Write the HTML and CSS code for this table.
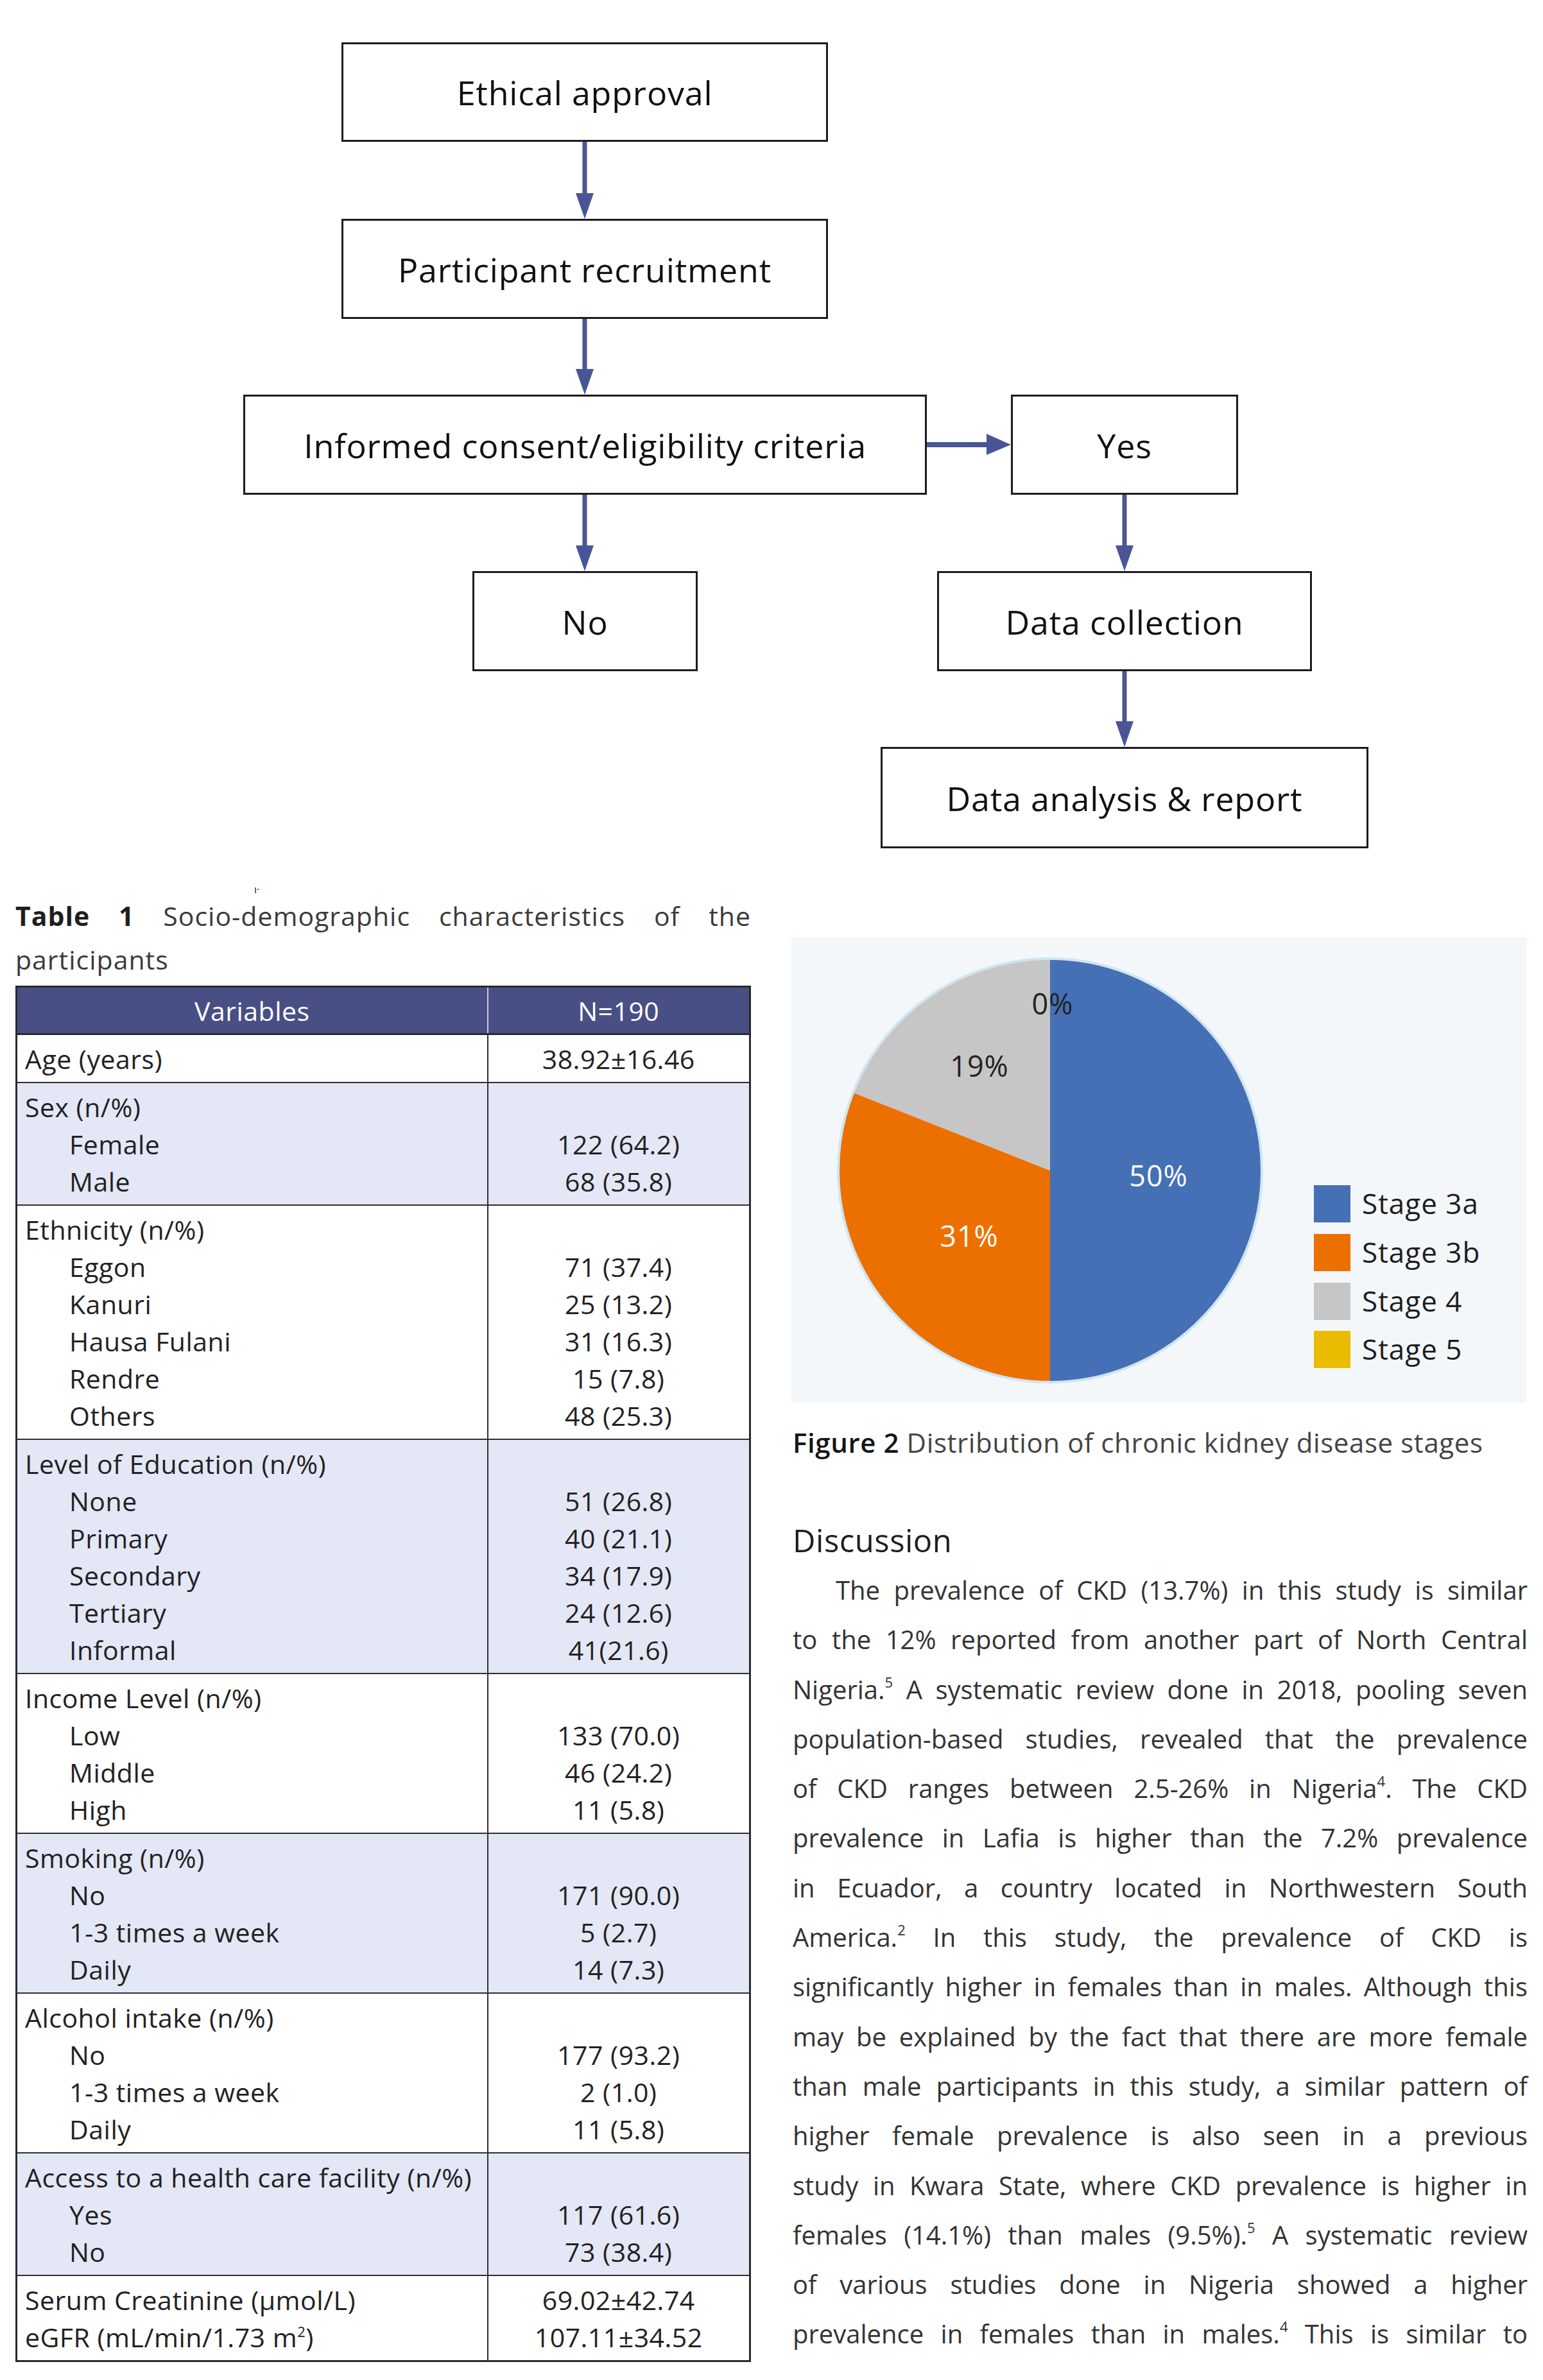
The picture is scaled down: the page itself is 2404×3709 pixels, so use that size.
FILE: index.html
```html
<!DOCTYPE html>
<html lang="en">
<head>
<meta charset="utf-8">
<title>CKD study</title>
<link rel="stylesheet" href="styles.css">
</head>
<body>
<div class="flow">
  <svg class="flow-arrows" width="2404" height="1380" viewBox="0 0 2404 1380">
    <g fill="#4a5597" stroke="none">
      <rect x="907.5" y="220" width="7" height="84"/>
      <polygon points="897,301 925,301 911,341"/>
      <rect x="907.5" y="497" width="7" height="81"/>
      <polygon points="897,575 925,575 911,615"/>
      <rect x="907.5" y="771" width="7" height="82"/>
      <polygon points="897,850 925,850 911,890"/>
      <rect x="1748.5" y="771" width="7" height="82"/>
      <polygon points="1738,850 1766,850 1752,890"/>
      <rect x="1748.5" y="1046" width="7" height="81"/>
      <polygon points="1738,1124 1766,1124 1752,1164"/>
      <rect x="1443" y="689" width="98" height="8"/>
      <polygon points="1537,676 1537,709 1575,693"/>
    </g>
  </svg>
  <div class="node n-ethic">Ethical approval</div>
  <div class="node n-recruit">Participant recruitment</div>
  <div class="node n-consent">Informed consent/eligibility criteria</div>
  <div class="node n-yes">Yes</div>
  <div class="node n-no">No</div>
  <div class="node n-collect">Data collection</div>
  <div class="node n-analysis">Data analysis &amp; report</div>
</div>

<div class="cols">
  <section class="left">
    <div class="stray">ı·</div>
    <div class="tcap">
      <span class="jline"><b>Table 1</b> Socio-demographic characteristics of the</span>
      <span class="lline">participants</span>
    </div>
    <table class="t1">
      <colgroup><col class="c1"><col class="c2"></colgroup>
      <thead>
        <tr><th>Variables</th><th>N=190</th></tr>
      </thead>
      <tbody>
        <tr class="w">
          <td><div>Age (years)</div></td>
          <td><div>38.92±16.46</div></td>
        </tr>
        <tr class="b">
          <td><div>Sex (n/%)</div><div class="sub">Female</div><div class="sub">Male</div></td>
          <td><div>&nbsp;</div><div>122 (64.2)</div><div>68 (35.8)</div></td>
        </tr>
        <tr class="w">
          <td><div>Ethnicity (n/%)</div><div class="sub">Eggon</div><div class="sub">Kanuri</div><div class="sub">Hausa Fulani</div><div class="sub">Rendre</div><div class="sub">Others</div></td>
          <td><div>&nbsp;</div><div>71 (37.4)</div><div>25 (13.2)</div><div>31 (16.3)</div><div>15 (7.8)</div><div>48 (25.3)</div></td>
        </tr>
        <tr class="b">
          <td><div>Level of Education (n/%)</div><div class="sub">None</div><div class="sub">Primary</div><div class="sub">Secondary</div><div class="sub">Tertiary</div><div class="sub">Informal</div></td>
          <td><div>&nbsp;</div><div>51 (26.8)</div><div>40 (21.1)</div><div>34 (17.9)</div><div>24 (12.6)</div><div>41(21.6)</div></td>
        </tr>
        <tr class="w">
          <td><div>Income Level (n/%)</div><div class="sub">Low</div><div class="sub">Middle</div><div class="sub">High</div></td>
          <td><div>&nbsp;</div><div>133 (70.0)</div><div>46 (24.2)</div><div>11 (5.8)</div></td>
        </tr>
        <tr class="b">
          <td><div>Smoking (n/%)</div><div class="sub">No</div><div class="sub">1-3 times a week</div><div class="sub">Daily</div></td>
          <td><div>&nbsp;</div><div>171 (90.0)</div><div>5 (2.7)</div><div>14 (7.3)</div></td>
        </tr>
        <tr class="w">
          <td><div>Alcohol intake (n/%)</div><div class="sub">No</div><div class="sub">1-3 times a week</div><div class="sub">Daily</div></td>
          <td><div>&nbsp;</div><div>177 (93.2)</div><div>2 (1.0)</div><div>11 (5.8)</div></td>
        </tr>
        <tr class="b">
          <td><div>Access to a health care facility (n/%)</div><div class="sub">Yes</div><div class="sub">No</div></td>
          <td><div>&nbsp;</div><div>117 (61.6)</div><div>73 (38.4)</div></td>
        </tr>
        <tr class="w">
          <td><div>Serum Creatinine (μmol/L)</div><div>eGFR (mL/min/1.73 m<sup>2</sup>)</div></td>
          <td><div>69.02±42.74</div><div>107.11±34.52</div></td>
        </tr>
      </tbody>
    </table>
  </section>

  <section class="right">
    <div class="chart">
      <svg width="1145" height="726" viewBox="0 0 1145 726">
        <path d="M403,364 L403,35 A329,329 0 0 1 403,693 Z" fill="#4570b6"/>
        <path d="M403,364 L403,693 A329,329 0 0 1 97.1,242.9 Z" fill="#ec7000"/>
        <path d="M403,364 L97.1,242.9 A329,329 0 0 1 403,35 Z" fill="#c6c6c6"/>
        <circle cx="403" cy="364" r="330" fill="none" stroke="#cfe5f0" stroke-width="4"/>
        <g class="plabel">
          <text x="572" y="389" fill="#ffffff">50%</text>
          <text x="277" y="483" fill="#ffffff">31%</text>
          <text x="293" y="218" fill="#222222">19%</text>
          <text x="407" y="121" fill="#222222">0%</text>
        </g>
        <rect x="814" y="387" width="57" height="58" fill="#4570b6"/>
        <rect x="814" y="463" width="57" height="58" fill="#ec7000"/>
        <rect x="814" y="539" width="57" height="58" fill="#c6c6c6"/>
        <rect x="814" y="614" width="57" height="58" fill="#eabb00"/>
        <g class="legend">
          <text x="889" y="432">Stage 3a</text>
          <text x="889" y="508">Stage 3b</text>
          <text x="889" y="584">Stage 4</text>
          <text x="889" y="659">Stage 5</text>
        </g>
      </svg>
    </div>
    <p class="fcap"><span class="fnum">Figure 2</span> Distribution of chronic kidney disease stages</p>
    <h2 class="disc">Discussion</h2>
    <div class="para">
      <span class="jline first">The prevalence of CKD (13.7%) in this study is similar</span>
      <span class="jline">to the 12% reported from another part of North Central</span>
      <span class="jline">Nigeria.<sup>5</sup> A systematic review done in 2018, pooling seven</span>
      <span class="jline">population-based studies, revealed that the prevalence</span>
      <span class="jline">of CKD ranges between 2.5-26% in Nigeria<sup>4</sup>. The CKD</span>
      <span class="jline">prevalence in Lafia is higher than the 7.2% prevalence</span>
      <span class="jline">in Ecuador, a country located in Northwestern South</span>
      <span class="jline">America.<sup>2</sup> In this study, the prevalence of CKD is</span>
      <span class="jline">significantly higher in females than in males. Although this</span>
      <span class="jline">may be explained by the fact that there are more female</span>
      <span class="jline">than male participants in this study, a similar pattern of</span>
      <span class="jline">higher female prevalence is also seen in a previous</span>
      <span class="jline">study in Kwara State, where CKD prevalence is higher in</span>
      <span class="jline">females (14.1%) than males (9.5%).<sup>5</sup> A systematic review</span>
      <span class="jline">of various studies done in Nigeria showed a higher</span>
      <span class="jline">prevalence in females than in males.<sup>4</sup> This is similar to</span>
    </div>
  </section>
</div>
</body>
</html>
```

FILE: styles.css
```css
html, body {
  margin: 0;
  padding: 0;
  background: #ffffff;
}
body {
  width: 2404px;
  font-family: "Open Sans", "Noto Sans", "Liberation Sans", sans-serif;
  color: #333333;
}

/* ---------- flowchart ---------- */
.flow {
  position: relative;
  width: 2404px;
  height: 1380px;
}
.flow-arrows {
  position: absolute;
  left: 0;
  top: 0;
}
.node {
  position: absolute;
  box-sizing: border-box;
  height: 156px;
  border: 3px solid #1c1c1c;
  display: flex;
  align-items: center;
  justify-content: center;
  font-size: 52px;
  letter-spacing: 0.8px;
  color: #111111;
  background: #ffffff;
}
.n-ethic    { left: 532px;  top: 66px;   width: 758px; height: 155px; }
.n-recruit  { left: 532px;  top: 341px;  width: 758px; }
.n-consent  { left: 379px;  top: 615px;  width: 1065px; }
.n-yes      { left: 1575px; top: 615px;  width: 354px; }
.n-no       { left: 736px;  top: 890px;  width: 351px; }
.n-collect  { left: 1460px; top: 890px;  width: 584px; }
.n-analysis { left: 1372px; top: 1164px; width: 760px; height: 158px; }

/* ---------- two columns ---------- */
.cols {
  display: flex;
  align-items: flex-start;
  padding-left: 24px;
  gap: 65px;
}
.left {
  width: 1146px;
}
.right {
  width: 1145px;
  padding-top: 80px;
}

.stray {
  height: 13px;
  padding-left: 372px;
  font-size: 16px;
  line-height: 13px;
  color: #222;
}

.tcap {
  font-size: 41px;
  line-height: 68px;
  letter-spacing: 1px;
  color: #3a3a3a;
  margin-bottom: 7px;
}
.tcap b {
  color: #1e1e1e;
  font-weight: 700;
}
.jline {
  display: block;
  text-align: justify;
  text-align-last: justify;
}
.lline {
  display: block;
}

/* ---------- table ---------- */
.t1 {
  width: 1146px;
  table-layout: fixed;
  border-collapse: collapse;
  border: 3px solid #2a2a2a;
  font-size: 41px;
  letter-spacing: 0.5px;
  color: #222222;
}
.t1 .c1 { width: 734px; }
.t1 th {
  background: #484f84;
  color: #ffffff;
  font-weight: 400;
  height: 71px;
  padding: 0;
  text-align: center;
  border-right: 2px solid #c9cbe0;
  border-bottom: 3px solid #2a2a2a;
}
.t1 td {
  vertical-align: top;
  padding: 8px 0 7px 12px;
  line-height: 58px;
  border: 2px solid #2f2f2f;
}
.t1 td + td {
  text-align: center;
  padding-left: 0;
}
.t1 tr.b td { background: #e4e7f5; }
.t1 tr.w td { background: #ffffff; }
.t1 .sub { padding-left: 69px; }
.t1 sup {
  font-size: 22px;
  line-height: 0;
  vertical-align: 16px;
}

/* ---------- chart ---------- */
.chart {
  width: 1145px;
  height: 726px;
  background: #f3f7fa;
  margin-left: -2px;
}
.chart svg { display: block; }
.plabel text {
  font-family: "Open Sans", "Noto Sans", sans-serif;
  font-size: 45px;
  letter-spacing: 1px;
  text-anchor: middle;
}
.legend text {
  font-family: "Open Sans", "Noto Sans", sans-serif;
  font-size: 44px;
  letter-spacing: 1px;
  fill: #1e1e1e;
}

.fcap {
  margin: 33px 0 0;
  font-size: 42px;
  line-height: 58px;
  letter-spacing: 0.6px;
  color: #444444;
}
.fnum {
  color: #151515;
  font-weight: 600;
}

.disc {
  margin: 93px 0 0;
  font-size: 49px;
  line-height: 60px;
  font-weight: 500;
  letter-spacing: 0.5px;
  color: #1e1e1e;
}

.para {
  margin-top: 9px;
  font-size: 40px;
  line-height: 77.3px;
  color: #333333;
}
.para .first { text-indent: 67px; }
.para sup {
  font-size: 22px;
  line-height: 0;
  vertical-align: 18px;
}
```
